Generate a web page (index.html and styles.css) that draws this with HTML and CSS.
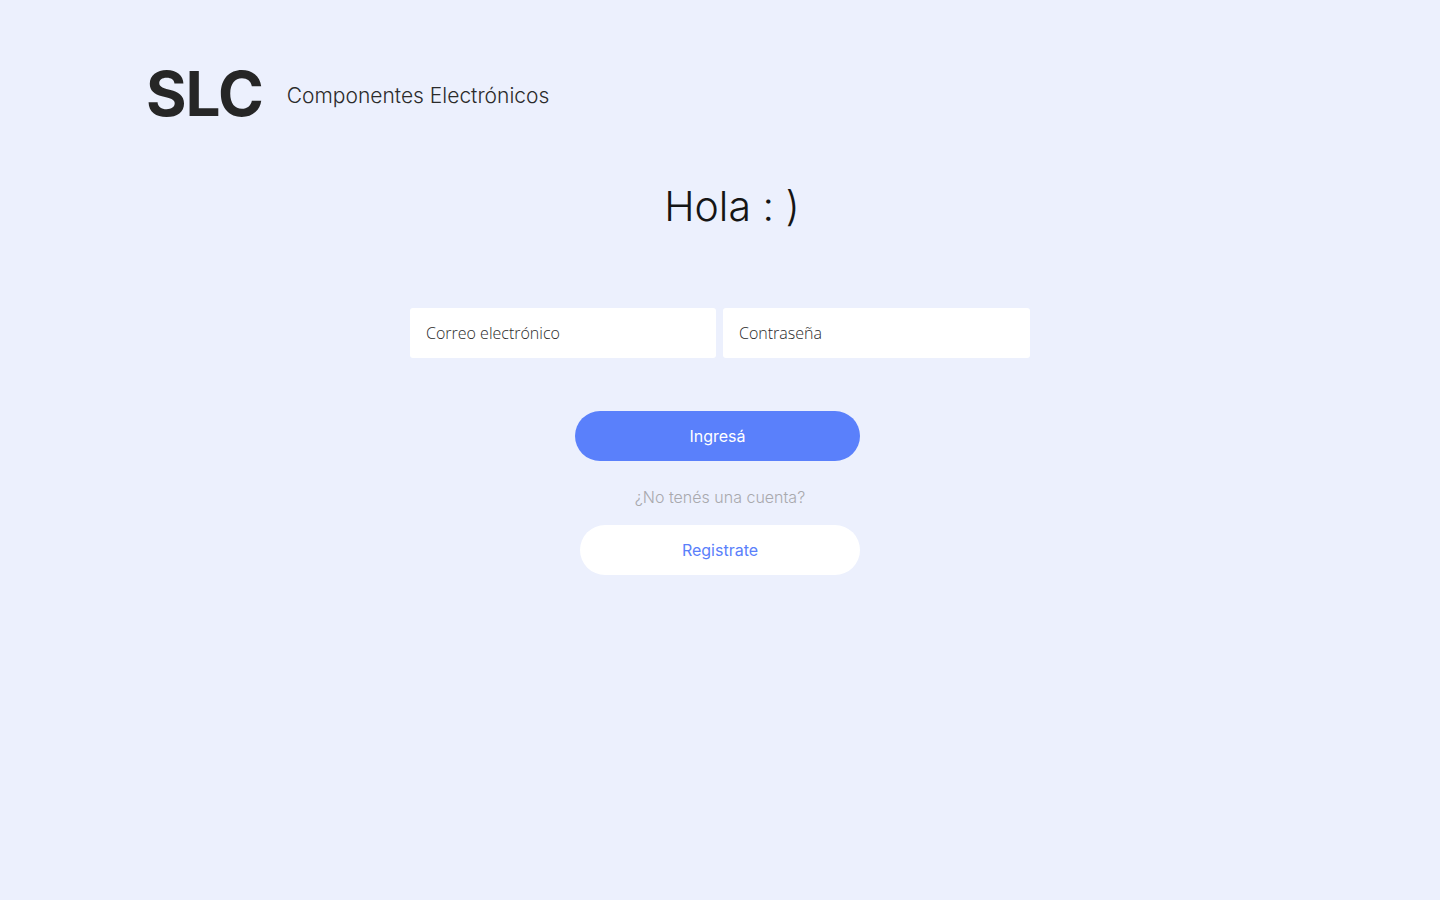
FILE: index.html
```html
<!DOCTYPE html>
<html lang="es">
<head>
<meta charset="utf-8">
<title>SLC - Componentes Electrónicos</title>
<link rel="stylesheet" href="styles.css">
</head>
<body>
<header class="header">
  <span class="logo">SLC</span>
  <span class="tagline">Componentes Electrónicos</span>
</header>
<main class="main">
  <h1 class="title">Hola : )</h1>
  <form class="form">
    <div class="fields">
      <input class="field" type="email" placeholder="Correo electrónico">
      <input class="field" type="password" placeholder="Contraseña">
    </div>
    <button class="btn btn-primary" type="button">Ingresá</button>
    <p class="hint">¿No tenés una cuenta?</p>
    <button class="btn btn-secondary" type="button">Registrate</button>
  </form>
</main>
</body>
</html>
```
FILE: styles.css
```css
* { box-sizing: border-box; }
html, body { margin: 0; padding: 0; }
body {
  background: #ecf0fd;
  font-family: Inter, "Open Sans", sans-serif;
  color: #262626;
  min-height: 900px;
}
.header {
  display: flex;
  align-items: center;
  gap: 24px;
  padding: 58px 0 0 146px;
}
.logo {
  font-size: 62px;
  font-weight: 700;
  line-height: 72px;
  letter-spacing: -1px;
  color: #262626;
}
.tagline {
  font-size: 21px;
  font-weight: 300;
  line-height: 28px;
  color: #2b2b2b;
  margin-top: 4px;
}
.main {
  display: flex;
  flex-direction: column;
  align-items: center;
}
.title {
  margin: 46px 0 0 24px;
  font-size: 41px;
  font-weight: 300;
  line-height: 60px;
  color: #151515;
}
.form {
  display: flex;
  flex-direction: column;
  align-items: center;
  margin-top: 72px;
}
.fields {
  display: grid;
  grid-template-columns: 306px 307px;
  gap: 7px;
}
.field {
  height: 50px;
  border: none;
  border-radius: 3px;
  background: #fff;
  padding: 0 16px;
  font-family: "Open Sans", sans-serif;
  font-size: 16px;
  font-weight: 300;
  color: #222;
  outline: none;
}
.field::placeholder { color: #2a2a2a; opacity: 1; }
.btn {
  height: 50px;
  border: none;
  border-radius: 25px;
  font-family: Inter, "Open Sans", sans-serif;
  font-size: 16px;
  font-weight: 400;
  cursor: pointer;
}
.btn-primary {
  width: 285px;
  margin: 53px 0 0 -5px;
  background: #5a80fb;
  color: #fff;
}
.hint {
  margin: 26px 0 0 0;
  font-size: 16px;
  font-weight: 300;
  line-height: 20px;
  color: #a9a9ad;
}
.btn-secondary {
  width: 280px;
  margin: 18px 0 0 0;
  background: #fff;
  color: #5a80fb;
}
```
